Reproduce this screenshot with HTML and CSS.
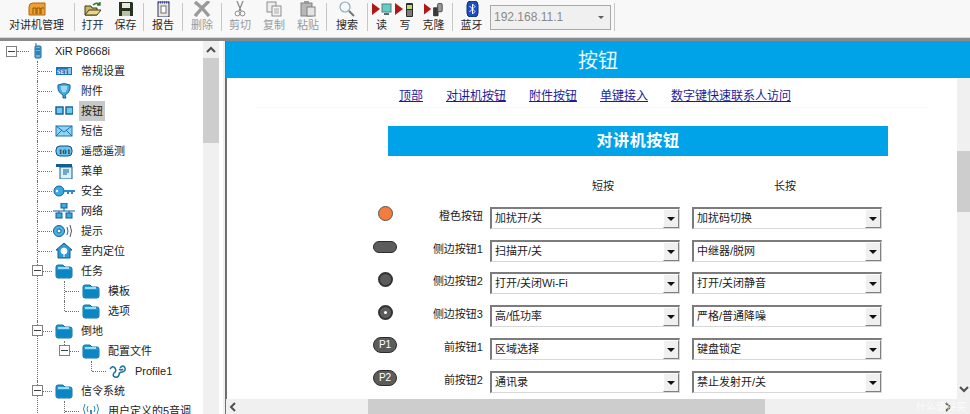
FILE: index.html
```html
<!doctype html>
<html lang="zh-CN">
<head>
    <meta charset="UTF-8">
    <title>XiR P8668i</title>
    <link rel="stylesheet" href="styles.css">
</head>
<body>
<svg class="defs" width="0" height="0">
    <symbol id="i-folder" viewBox="0 0 18 16">
        <path d="M1 4 Q1 2 3 2 H8 L10 4 H15 Q17 4 17 6 V13 Q17 15 15 15 H3 Q1 15 1 13 Z" fill="#1f9bd8" stroke="#1b6f9e"/>
        <path d="M2 7 H16 V13 Q16 14 15 14 H3 Q2 14 2 13 Z" fill="#0b86c4"/>
        <path d="M3 5 H14" stroke="#9adcf7" stroke-width="2"/>
    </symbol>
    <symbol id="i-chev-up" viewBox="0 0 10 8"><path d="M1 6 L5 2 L9 6" fill="none" stroke="#505050" stroke-width="2"/></symbol>
    <symbol id="i-chev-down" viewBox="0 0 10 8"><path d="M1 2 L5 6 L9 2" fill="none" stroke="#505050" stroke-width="2"/></symbol>
    <symbol id="i-chev-left" viewBox="0 0 8 10"><path d="M6 1 L2 5 L6 9" fill="none" stroke="#505050" stroke-width="2"/></symbol>
    <symbol id="i-chev-right" viewBox="0 0 8 10"><path d="M2 1 L6 5 L2 9" fill="none" stroke="#505050" stroke-width="2"/></symbol>
    <symbol id="i-play" viewBox="0 0 8 14"><path d="M0 1 L8 7 L0 13 Z" fill="#b01818"/></symbol>
</svg>

<header class="toolbar">
    <button class="tool w73">
        <svg class="tool-icon" viewBox="0 0 20 16"><path d="M2 14 V6 Q2 2 6 2 H18 V14 Z" fill="#f0a030" stroke="#a86a10"/><path d="M6 13 V7 H9 V13 M10 13 V7 H13 V13 M14 13 V7 H17" fill="none" stroke="#8a5608"/></svg>
        对讲机管理
    </button>
    <i class="sep"></i>
    <button class="tool w33">
        <svg class="tool-icon" viewBox="0 0 20 16"><path d="M2 14 V5 H8 L9 7 H14 V14 Z" fill="#c8b860" stroke="#3c3c20"/><path d="M2 14 L6 9 H18 L14 14 Z" fill="#e8d880" stroke="#3c3c20"/><path d="M10 4 Q13 1 17 3 M17 1 V4 H14" fill="none" stroke="#2c7a2c" stroke-width="1.4"/></svg>
        打开
    </button>
    <button class="tool w33">
        <svg class="tool-icon" viewBox="0 0 20 16"><path d="M3 1 H16 L17 2 V15 H3 Z" fill="#25331f"/><rect x="6" y="2" width="8" height="5" fill="#e8e8e0"/><rect x="6" y="10" width="8" height="5" fill="#b8c0a8"/></svg>
        保存
    </button>
    <i class="sep"></i>
    <button class="tool w36">
        <svg class="tool-icon" viewBox="0 0 20 16"><rect x="5" y="1" width="11" height="15" fill="#e8e8d8" stroke="#30306a"/><path d="M5 1 H16 M5 2 H16" stroke="#2c3c9c" stroke-dasharray="1 1"/><rect x="8" y="5" width="5" height="7" fill="#fff" stroke="#707070"/></svg>
        报告
    </button>
    <i class="sep"></i>
    <button class="tool w36 off">
        <svg class="tool-icon" viewBox="0 0 20 16"><path d="M3 1 L10 7 L17 0 M17 15 L10 7 L3 15" fill="none" stroke="#9a9a9a" stroke-width="3.4"/></svg>
        删除
    </button>
    <i class="sep"></i>
    <button class="tool w34 off">
        <svg class="tool-icon" viewBox="0 0 20 16"><path d="M7 0 L11 10 M13 0 L9 10" fill="none" stroke="#8c8c8c" stroke-width="1.3"/><circle cx="7.5" cy="12.5" r="2.4" fill="none" stroke="#8c8c8c"/><circle cx="12.5" cy="12.5" r="2.4" fill="none" stroke="#8c8c8c"/></svg>
        剪切
    </button>
    <button class="tool w34 off">
        <svg class="tool-icon" viewBox="0 0 20 16"><rect x="3" y="1" width="9" height="10" fill="#eee" stroke="#8c8c8c"/><rect x="8" y="5" width="9" height="10" fill="#f4f4f4" stroke="#8c8c8c"/><path d="M10 8 H15 M10 10 H15 M10 12 H15" stroke="#aaa"/></svg>
        复制
    </button>
    <button class="tool w34 off">
        <svg class="tool-icon" viewBox="0 0 20 16"><rect x="3" y="2" width="11" height="13" fill="#b8b8b8" stroke="#808080"/><rect x="6" y="0" width="5" height="3" fill="#999"/><rect x="9" y="6" width="8" height="9" fill="#e4e4e4" stroke="#808080"/></svg>
        粘贴
    </button>
    <i class="sep"></i>
    <button class="tool w38">
        <svg class="tool-icon" viewBox="0 0 20 16"><circle cx="8" cy="6" r="5" fill="#f4fafd" stroke="#90a8b8" stroke-width="1.2"/><path d="M12 10 L17 15" stroke="#707878" stroke-width="2"/></svg>
        搜索
    </button>
    <i class="sep"></i>
    <button class="tool w25">
        <svg class="tool-icon" viewBox="0 0 20 16"><use href="#i-play" x="0" y="1" width="8" height="14"/><rect x="10" y="3" width="9" height="8" fill="#5fd0c8" stroke="#5a7a7a"/><path d="M12 13 H17" stroke="#507070" stroke-width="2"/></svg>
        读
    </button>
    <button class="tool w22">
        <svg class="tool-icon" viewBox="0 0 20 16"><use href="#i-play" x="0" y="1" width="8" height="14"/><rect x="11" y="2" width="7" height="14" rx="1" fill="#2c2c2c"/><rect x="12" y="4" width="5" height="4" fill="#b8e070"/><path d="M12 10 H17 M12 12 H17 M12 14 H17" stroke="#ccc"/></svg>
        写
    </button>
    <button class="tool w35">
        <svg class="tool-icon" viewBox="0 0 22 16"><use href="#i-play" x="0" y="1" width="8" height="14"/><rect x="10" y="6" width="6" height="10" rx="1" fill="#3a3a3a"/><rect x="15" y="2" width="5" height="9" rx="1" fill="#9a9a9a" stroke="#444"/></svg>
        克隆
    </button>
    <i class="sep"></i>
    <button class="tool w35">
        <svg class="tool-icon" viewBox="0 0 20 16"><rect x="5" y="0" width="11" height="16" rx="4" fill="#1c4fc0" stroke="#102c78"/><path d="M7.5 5 L13 10.5 L10.5 13 V3 L13 5.5 L7.5 11" fill="none" stroke="#fff"/></svg>
        蓝牙
    </button>
    <div class="combo">
        <span>192.168.11.1</span>
        <i class="combo-arrow"></i>
    </div>
    <i class="sep sep-last"></i>
</header>

<main class="workspace">
    <aside class="tree-pane">
        <div class="tree-scroll">
            <div class="node root">
                <i class="expander"></i><i class="stub stub-root"></i>
                <svg class="radio" viewBox="0 0 8 16"><path d="M2 0 V3" stroke="#2a6fa8"/><rect x="1" y="3" width="6" height="12" rx="1" fill="#5bb6e8" stroke="#1c5f92"/><path d="M2 6 H6 M2 9 H6 M2 11 H6" stroke="#0c4a7c"/></svg>
                <span class="label">XiR P8668i</span>
            </div>
            <ul class="tree level-top">
                <li><div class="node"><i class="stub"></i>
                    <svg class="node-icon" viewBox="0 0 18 16"><rect x="1" y="4" width="16" height="8" fill="#1a73b4"/><text x="2" y="10.5" class="icon-text" textLength="10.5" lengthAdjust="spacingAndGlyphs">SET</text><rect x="13" y="5" width="3" height="6" fill="#7fc8ef"/></svg>
                    <span class="label">常规设置</span></div></li>
                <li><div class="node"><i class="stub"></i>
                    <svg class="node-icon" viewBox="0 0 18 16"><path d="M3 2 Q9 -1 15 2 Q16 9 10 12 L11 15 L8 15 L8 12 Q2 9 3 2 Z" fill="#45aee6" stroke="#0f5f92"/><path d="M6 4 H12 M6 6 H12 M7 8 H11" stroke="#fff"/></svg>
                    <span class="label">附件</span></div></li>
                <li><div class="node"><i class="stub"></i>
                    <svg class="node-icon" viewBox="0 0 18 16"><rect x="1" y="4" width="7" height="7" fill="#6fcaf0" stroke="#0f5f92" stroke-width="1.4"/><rect x="11" y="4" width="7" height="7" fill="#6fcaf0" stroke="#0f5f92" stroke-width="1.4"/></svg>
                    <span class="label selected">按钮</span></div></li>
                <li><div class="node"><i class="stub"></i>
                    <svg class="node-icon" viewBox="0 0 18 16"><rect x="1" y="3" width="16" height="10" fill="#8fd4f4" stroke="#1a73b4"/><path d="M1 3 L9 9 L17 3 M1 13 L7 7 M17 13 L11 7" fill="none" stroke="#1a73b4"/></svg>
                    <span class="label">短信</span></div></li>
                <li><div class="node"><i class="stub"></i>
                    <svg class="node-icon" viewBox="0 0 18 16"><rect x="1" y="3" width="16" height="10" rx="4" fill="#6fc4ee" stroke="#0f4f82"/><text x="3.4" y="11" class="icon-text dark">101</text></svg>
                    <span class="label">遥感遥测</span></div></li>
                <li><div class="node"><i class="stub"></i>
                    <svg class="node-icon" viewBox="0 0 18 16"><rect x="1" y="1" width="16" height="3" fill="#0f5f92"/><rect x="5" y="4" width="12" height="12" fill="#d8f0fc" stroke="#0f5f92"/><path d="M8 7 H14 M8 9 H14 M8 11 H12" stroke="#0f5f92"/></svg>
                    <span class="label">菜单</span></div></li>
                <li><div class="node"><i class="stub"></i>
                    <svg class="node-icon wide" viewBox="0 0 22 16"><circle cx="6" cy="8" r="5" fill="#3aa8e6" stroke="#0f5f92"/><circle cx="4" cy="8" r="1.2" fill="#fff"/><path d="M11 7 H22 V9 H20 V11 H18 V9 H16 V11 H14 V9 H11 Z" fill="#2a8cc8"/></svg>
                    <span class="label">安全</span></div></li>
                <li><div class="node"><i class="stub"></i>
                    <svg class="node-icon wide" viewBox="0 0 22 16"><rect x="8" y="0" width="6" height="5" fill="#3aa8e6" stroke="#0f5f92"/><rect x="3" y="10" width="6" height="5" fill="#3aa8e6" stroke="#0f5f92"/><rect x="13" y="10" width="6" height="5" fill="#3aa8e6" stroke="#0f5f92"/><path d="M0 8 H22 M11 5 V8 M6 8 V10 M16 8 V10" stroke="#0f5f92"/></svg>
                    <span class="label">网络</span></div></li>
                <li><div class="node"><i class="stub"></i>
                    <svg class="node-icon wide" viewBox="0 0 22 16"><circle cx="6" cy="8" r="5.5" fill="#4ab0e8" stroke="#0f5f92"/><circle cx="6" cy="8" r="2" fill="#fff" stroke="#0f5f92"/><path d="M14 4 Q16 8 14 12 M17 2 Q20 8 17 14" fill="none" stroke="#40586c"/></svg>
                    <span class="label">提示</span></div></li>
                <li><div class="node"><i class="stub"></i>
                    <svg class="node-icon" viewBox="0 0 18 16"><path d="M9 0 L17 7 H15 V15 H3 V7 H1 Z" fill="#2a9ad8" stroke="#0f5f92"/><path d="M9 5 A3 3 0 0 1 9 11 A3 3 0 0 1 9 5 Z M9 11 V14" fill="#fff" stroke="#fff"/></svg>
                    <span class="label">室内定位</span></div></li>
                <li>
                    <div class="node"><i class="expander over"></i><i class="stub"></i>
                        <svg class="node-icon"><use href="#i-folder"/></svg>
                        <span class="label">任务</span></div>
                    <ul class="tree">
                        <li><div class="node"><i class="stub"></i>
                            <svg class="node-icon"><use href="#i-folder"/></svg>
                            <span class="label">模板</span></div></li>
                        <li><div class="node"><i class="stub"></i>
                            <svg class="node-icon"><use href="#i-folder"/></svg>
                            <span class="label">选项</span></div></li>
                    </ul>
                </li>
                <li>
                    <div class="node"><i class="expander over"></i><i class="stub"></i>
                        <svg class="node-icon"><use href="#i-folder"/></svg>
                        <span class="label">倒地</span></div>
                    <ul class="tree">
                        <li>
                            <div class="node"><i class="expander over"></i><i class="stub"></i>
                                <svg class="node-icon"><use href="#i-folder"/></svg>
                                <span class="label">配置文件</span></div>
                            <ul class="tree">
                                <li><div class="node"><i class="stub"></i>
                                    <svg class="node-icon" viewBox="0 0 18 16"><path d="M1 6 Q4 2 6 5 Q8 8 5 10 Q3 13 6 14 Q9 15 10 12 Q10 9 13 9 Q17 8 16 5 Q14 1 11 5 M10 6 Q12 8 14 6" fill="none" stroke="#1a6f9e" stroke-width="1.5"/></svg>
                                    <span class="label">Profile1</span></div></li>
                            </ul>
                        </li>
                    </ul>
                </li>
                <li>
                    <div class="node"><i class="expander over"></i><i class="stub"></i>
                        <svg class="node-icon"><use href="#i-folder"/></svg>
                        <span class="label">信令系统</span></div>
                    <ul class="tree">
                        <li><div class="node"><i class="stub"></i>
                            <svg class="node-icon" viewBox="0 0 18 16"><path d="M9 7 V15" stroke="#0f5f92" stroke-width="1.5"/><path d="M6 3 Q4 6 6 9 M12 3 Q14 6 12 9 M3 1 Q0 6 3 11 M15 1 Q18 6 15 11" fill="none" stroke="#2a8cc8"/></svg>
                            <span class="label">用户定义的5音调</span></div></li>
                    </ul>
                </li>
            </ul>
        </div>
        <div class="vbar vbar-tree">
            <svg class="chev"><use href="#i-chev-up"/></svg>
            <div class="vthumb vthumb-tree"></div>
        </div>
    </aside>
    <div class="splitter"></div>

    <section class="page">
        <h1 class="banner">按钮</h1>
        <div class="page-body">
            <div class="view">
                <nav class="links">
                    <a href="#top">顶部</a>
                    <a href="#radio">对讲机按钮</a>
                    <a href="#acc">附件按钮</a>
                    <a href="#one">单键接入</a>
                    <a href="#num">数字键快速联系人访问</a>
                </nav>
                <h2 class="section-title">对讲机按钮</h2>
                <div class="keys">
                    <span></span><span></span>
                    <span class="col-head short">短按</span>
                    <span class="col-head long">长按</span>

                    <span class="key-icon"><i class="dot orange"></i></span>
                    <span class="key-name">橙色按钮</span>
                    <div class="select"><span>加扰开/关</span><i class="drop"></i></div>
                    <div class="select"><span>加扰码切换</span><i class="drop"></i></div>

                    <span class="key-icon"><i class="pill slim"></i></span>
                    <span class="key-name">侧边按钮1</span>
                    <div class="select"><span>扫描开/关</span><i class="drop"></i></div>
                    <div class="select"><span>中继器/脱网</span><i class="drop"></i></div>

                    <span class="key-icon"><i class="dot"></i></span>
                    <span class="key-name">侧边按钮2</span>
                    <div class="select"><span>打开/关闭Wi-Fi</span><i class="drop"></i></div>
                    <div class="select"><span>打开/关闭静音</span><i class="drop"></i></div>

                    <span class="key-icon"><i class="dot centered"></i></span>
                    <span class="key-name">侧边按钮3</span>
                    <div class="select"><span>高/低功率</span><i class="drop"></i></div>
                    <div class="select"><span>严格/普通降噪</span><i class="drop"></i></div>

                    <span class="key-icon"><i class="pill">P1</i></span>
                    <span class="key-name">前按钮1</span>
                    <div class="select"><span>区域选择</span><i class="drop"></i></div>
                    <div class="select"><span>键盘锁定</span><i class="drop"></i></div>

                    <span class="key-icon"><i class="pill">P2</i></span>
                    <span class="key-name">前按钮2</span>
                    <div class="select"><span>通讯录</span><i class="drop"></i></div>
                    <div class="select"><span>禁止发射开/关</span><i class="drop"></i></div>
                </div>
            </div>
            <div class="vbar vbar-page">
                <div class="vthumb vthumb-page"></div>
                <svg class="chev chev-end"><use href="#i-chev-down"/></svg>
            </div>
        </div>
        <div class="hbar">
            <svg class="chev-h"><use href="#i-chev-left"/></svg>
            <div class="hthumb"></div>
            <svg class="chev-h"><use href="#i-chev-right"/></svg>
            <span class="watermark">什么值得买</span>
        </div>
    </section>
</main>
</body>
</html>
```

FILE: styles.css
```css
* {
    box-sizing: border-box;
}

html, body {
    margin: 0;
    height: 414px;
    overflow: hidden;
}

body {
    background: #fff;
    color: #222;
    font-family: "Liberation Sans", "Noto Sans CJK SC", sans-serif;
    font-size: 11px;
}

.defs {
    position: absolute;
}

/* toolbar */
.toolbar {
    display: flex;
    align-items: center;
    height: 41px;
    padding-bottom: 4px;
    background: #f8f8f8;
    border-bottom: 3px solid #8a8a8a;
    box-shadow: inset 0 -1px 0 #d8d8d8;
}

.tool {
    display: flex;
    flex-direction: column;
    align-items: center;
    height: 34px;
    padding: 1px 0 0;
    border: 0;
    background: none;
    color: #2a2a2a;
    font: inherit;
    line-height: 17px;
    flex: none;
}

.tool.off {
    color: #9a9a9a;
}

.tool-icon {
    width: 20px;
    height: 17px;
}

.w73 { width: 73px; }
.w38 { width: 38px; }
.w36 { width: 36px; }
.w35 { width: 35px; }
.w34 { width: 34px; }
.w33 { width: 33px; }
.w25 { width: 25px; }
.w22 { width: 22px; }

.sep {
    flex: none;
    width: 1px;
    height: 28px;
    margin: 0 1px;
    background: #c6c6c6;
}

.sep-last {
    margin-left: 3px;
}

.combo {
    display: flex;
    align-items: center;
    justify-content: space-between;
    flex: none;
    width: 121px;
    height: 25px;
    margin-left: 1px;
    padding: 0 6px 0 3px;
    background: #f0f0f0;
    border: 1px solid #a8a8a8;
    color: #8a8a8a;
    font-size: 12px;
}

.combo-arrow {
    border-top: 3px solid #606060;
    border-left: 3px solid transparent;
    border-right: 3px solid transparent;
}

/* panes */
.workspace {
    display: flex;
    height: 373px;
}

.tree-pane {
    display: flex;
    flex: none;
    width: 219px;
    overflow: hidden;
}

.tree-scroll {
    flex: none;
    width: 203px;
    overflow: hidden;
}

.splitter {
    flex: none;
    width: 6px;
    background: linear-gradient(to right, #fff 0 4px, #f0f0f0 4px);
}

/* tree */
.tree {
    list-style: none;
    margin: 0 0 0 27px;
    padding: 0;
}

.level-top {
    margin-left: 37px;
}

.tree li {
    position: relative;
}

.tree li::before {
    content: "";
    position: absolute;
    left: 0;
    top: 0;
    bottom: 0;
    border-left: 1px dotted #707070;
}

.tree li:last-child::before {
    bottom: auto;
    height: 10px;
}

.level-top > li:last-child::before,
.level-top > li:last-child > .tree > li:last-child::before {
    bottom: 0;
    height: auto;
}

.node {
    position: relative;
    display: flex;
    align-items: center;
    height: 20px;
    padding-left: 1px;
}

.stub {
    flex: none;
    width: 14px;
    margin-right: 3px;
    border-top: 1px dotted #707070;
}

.node-icon {
    flex: none;
    width: 18px;
    height: 16px;
}

.node-icon.wide {
    width: 22px;
    margin: 0 -2px;
}

.label {
    margin-left: 6px;
    padding: 0 2px;
    height: 20px;
    line-height: 20px;
    white-space: nowrap;
}

.selected {
    background: #c8c8c8;
}

.expander {
    position: relative;
    flex: none;
    width: 11px;
    height: 11px;
    background: #fff;
    border: 1px solid #808080;
}

.expander::after {
    content: "";
    position: absolute;
    left: 1px;
    right: 1px;
    top: 4px;
    border-top: 1px solid #404040;
}

.expander.over {
    position: absolute;
    left: -5px;
    top: 4px;
    z-index: 1;
}

.root {
    padding-left: 6px;
}

.stub-root {
    width: 12px;
    margin-right: 5px;
}

.radio {
    flex: none;
    width: 8px;
    height: 16px;
}

.root .label {
    margin-left: 11px;
}

/* scrollbars */
.vbar {
    display: flex;
    flex-direction: column;
    align-items: center;
    flex: none;
    background: #f0f0f0;
}

.vbar-tree {
    width: 16px;
}

.vbar-page {
    width: 13px;
    padding-top: 73px;
}

.chev {
    flex: none;
    width: 10px;
    height: 8px;
    margin: 5px 0 4px;
}

.chev-end {
    margin: auto 0 6px;
}

.vthumb {
    flex: none;
    width: 100%;
    background: #cdcdcd;
}

.vthumb-tree {
    height: 85px;
}

.vthumb-page {
    height: 61px;
}

.hbar {
    position: relative;
    display: flex;
    align-items: center;
    height: 15px;
    padding-left: 3px;
    background: #f0f0f0;
}

.chev-h {
    flex: none;
    width: 8px;
    height: 10px;
}

.hthumb {
    flex: none;
    width: 397px;
    height: 15px;
    margin: 0 179px 0 131px;
    background: #cdcdcd;
}

.watermark {
    position: absolute;
    right: 4px;
    top: 1px;
    color: #fff;
    opacity: .8;
    font-size: 10px;
    line-height: 13px;
}

/* page */
.page {
    display: flex;
    flex-direction: column;
    flex: 1;
    min-width: 0;
    border-left: 1px solid #707070;
}

.banner {
    flex: none;
    height: 37px;
    margin: 0;
    background: #00a2e8;
    color: #e8f8ff;
    font-size: 20px;
    font-weight: normal;
    line-height: 40px;
    text-align: center;
}

.page-body {
    display: flex;
    flex: 1;
    min-height: 0;
}

.view {
    flex: 1;
    min-width: 0;
    overflow: hidden;
    border-left: 1px solid #707070;
}

.links {
    display: flex;
    justify-content: center;
    gap: 23px;
    height: 30px;
    margin: 0 28px;
    padding-left: 6px;
    border-bottom: 1px solid #f6f6f6;
    font-size: 12px;
    line-height: 36px;
}

.links a {
    color: #1c1c9a;
}

.section-title {
    width: 500px;
    height: 30px;
    margin: 18px 0 0 161px;
    background: #00a2e8;
    color: #fff;
    font-size: 16px;
    letter-spacing: .6px;
    line-height: 30px;
    text-align: center;
}

.keys {
    display: grid;
    grid-template-columns: 50px 73px 197px 202px;
    grid-auto-rows: 21px;
    row-gap: 11.8px;
    margin: 18px 0 0 133px;
}

.keys .select:nth-child(4n+3) {
    margin-left: 7px;
}

.keys .select:nth-child(4n) {
    margin-left: 12px;
}

.col-head {
    text-align: center;
    line-height: 24px;
}

.col-head.short {
    padding-left: 43px;
}

.col-head.long {
    padding-left: 8px;
}

.key-icon {
    display: flex;
    align-items: center;
    justify-content: center;
    padding-bottom: 7px;
}

.key-name {
    text-align: right;
    line-height: 18px;
    white-space: nowrap;
}

.dot {
    position: relative;
    width: 15px;
    height: 15px;
    border-radius: 50%;
    background: #5c5c5c;
    border: 2px solid #333;
}

.dot.orange {
    background: #f47c3c;
    border-color: #555;
    border-width: 1px;
}

.dot.centered::after {
    content: "";
    position: absolute;
    left: 4px;
    top: 4px;
    width: 3px;
    height: 3px;
    border-radius: 50%;
    background: #fff;
}

.pill {
    width: 24px;
    height: 16px;
    border-radius: 8px;
    background: #5c5c5c;
    border: 1px solid #2c2c2c;
    color: #fff;
    font-size: 10px;
    font-style: normal;
    line-height: 14px;
    text-align: center;
}

.pill.slim {
    height: 12px;
}

.select {
    display: flex;
    align-items: center;
    justify-content: space-between;
    height: 22px;
    padding-left: 3px;
    background: #fff;
    border-top: 2px solid #7c7c7c;
    border-left: 2px solid #7c7c7c;
    border-right: 1px solid #d8d8d8;
    border-bottom: 1px solid #d8d8d8;
    white-space: nowrap;
}

.select span {
    line-height: 16px;
    margin-top: -1px;
}

.drop {
    position: relative;
    flex: none;
    width: 16px;
    height: 19px;
    background: #f0f0f0;
    border-top: 1px solid #fff;
    border-left: 1px solid #fff;
    border-right: 1px solid #808080;
    border-bottom: 1px solid #808080;
}

.drop::after {
    content: "";
    position: absolute;
    left: 3px;
    top: 7px;
    border-top: 4px solid #111;
    border-left: 4px solid transparent;
    border-right: 4px solid transparent;
}

.icon-text {
    fill: #fff;
    font-family: "DejaVu Serif", serif;
    font-size: 6px;
    font-weight: bold;
}

.icon-text.dark {
    fill: #0c3a62;
}
```
